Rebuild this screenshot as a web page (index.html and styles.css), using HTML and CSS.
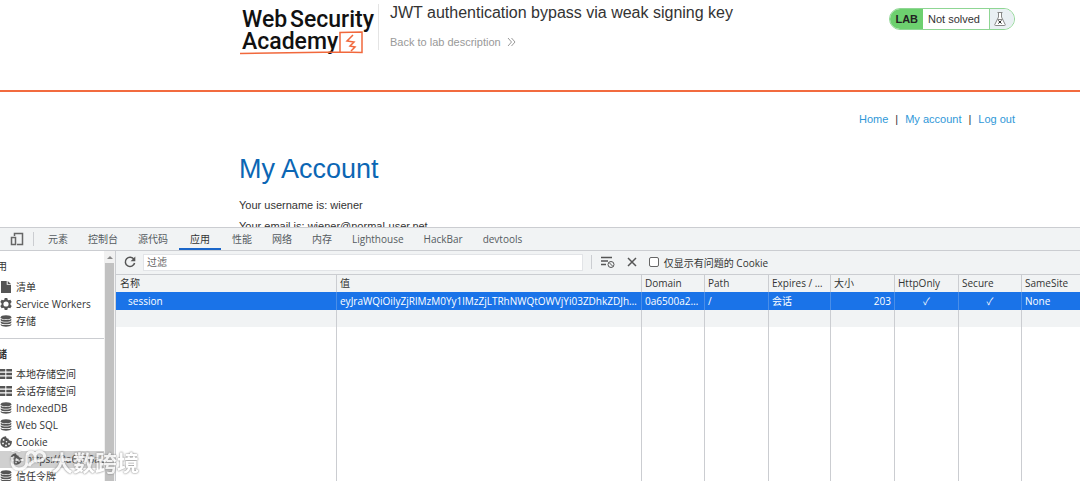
FILE: index.html
```html
<!DOCTYPE html>
<html lang="zh-CN">
<head>
<meta charset="utf-8">
<title>JWT authentication bypass via weak signing key</title>
<link rel="stylesheet" href="styles.css">
</head>
<body>
<svg class="defs" width="0" height="0" aria-hidden="true">
  <symbol id="db" viewBox="0 0 12 12"><ellipse cx="6" cy="2.3" rx="5.3" ry="2"/><path d="M.7 3.7c1 1.6 9.600 1.600 10.600 0v1.500c-1 2-9.600 2-10.600 0zM.7 6.300c1 1.600 9.600 1.600 10.600 0v1.500c-1 2-9.600 2-10.600 0zM.7 8.900c1 1.600 9.600 1.600 10.600 0v1c-1 2.300-9.600 2.300-10.600 0z"/></symbol>
  <symbol id="grid" viewBox="0 0 12 12"><path d="M0 1h5.300v2.600H0zM6.300 1H12v2.600H6.300zM0 4.700h5.300v2.600H0zM6.300 4.700H12v2.600H6.300zM0 8.400h5.300V11H0zM6.300 8.400H12V11H6.300z"/></symbol>
  <symbol id="file" viewBox="0 0 12 12"><path d="M1 0h5.700v3.800H11V12H1zM7.700 0L11 3H7.700z"/></symbol>
  <symbol id="gear" viewBox="0 0 12 12"><path fill-rule="evenodd" d="M4.700 0h2.600l.4 1.700 1 .6 1.700-.5 1.300 2.300L10.500 5.300v1.400l1.200 1.200-1.300 2.300-1.700-.5-1 .6-.4 1.700H4.700l-.4-1.700-1-.6-1.700.5L.3 7.900l1.200-1.200V5.300L.3 4.100l1.300-2.300 1.700.5 1-.6zM6 3.400a2.600 2.600 0 1 0 0 5.200 2.600 2.600 0 0 0 0-5.200z"/></symbol>
  <symbol id="cookie" viewBox="0 0 12 12"><path fill-rule="evenodd" d="M6 .2c.2 1.500.9 2.300 2.300 2.300.2 1.500 1.300 2.300 3.500 2.500A5.800 5.800 0 1 1 6 .2zM3.600 3a.9.900 0 1 0 0 1.800.9.900 0 0 0 0-1.800zM3 6.500A.9.900 0 1 0 3 8.300.9.900 0 0 0 3 6.500zM6.500 5a.8.800 0 1 0 0 1.600.8.800 0 0 0 0-1.600zM6 8.500a.9.900 0 1 0 0 1.800.9.900 0 0 0 0-1.800zM9 7a.9.900 0 1 0 0 1.800A.9.900 0 0 0 9 7z"/></symbol>
</svg>

<main class="site">
  <header class="lab-header">
    <svg class="logo" width="137" height="50" viewBox="0 0 137 50" role="img" aria-label="Web Security Academy">
      <text x="3" y="23">Web</text><text x="51" y="23">Security</text>
      <text x="3" y="45">Academy</text>
      <path class="logo-line" d="M1 49.500L101 48V28.500L123 28V48.500L101 48"/>
      <path class="logo-bolt" d="M114 31l-6 6 7 1-4 4 5 1-4 4"/>
    </svg>
    <div class="lab-title">
      <h2>JWT authentication bypass via weak signing key</h2>
      <a href="#lab">Back to lab description
        <svg width="9" height="8" viewBox="0 0 9 8"><path d="M1 0l3.500 4L1 8M4.500 0L8 4 4.500 8"/></svg>
      </a>
    </div>
    <div class="status">
      <strong>LAB</strong><span class="status-text">Not solved</span>
      <span class="flask"><svg width="12" height="14" viewBox="0 0 12 14"><path d="M3.500.5h5M4.500.500V5L.700 12.800q0 .7.600.7h9.400q.6 0 .6-.7L7.500 5V.5M3.500 7.500h5"/><path class="flask-x" d="M4.300 8.500l3.200 3M7.500 8.500l-3.200 3"/></svg></span>
    </div>
  </header>
  <section class="account">
    <nav class="site-nav"><a href="#home">Home</a><span>|</span><a href="#account">My account</a><span>|</span><a href="#logout">Log out</a></nav>
    <h1>My Account</h1>
    <p>Your username is: wiener</p>
    <p>Your email is: wiener@normal-user.net</p>
  </section>
</main>

<section class="devtools">
  <div class="tabs">
    <button class="device" aria-label="切换设备工具栏"><svg width="14" height="14" viewBox="0 0 14 14"><path d="M4.500 4V1.500h8v11H7M1.500 5.500h4v7h-4z"/></svg></button>
    <button>元素</button><button>控制台</button><button>源代码</button><button class="active">应用</button><button>性能</button><button>网络</button><button>内存</button><button>Lighthouse</button><button>HackBar</button><button>devtools</button>
  </div>
  <div class="workspace">
    <aside class="sidebar">
      <div class="tree">
        <h3>应用</h3>
        <ul>
          <li><svg><use href="#file"/></svg>清单</li>
          <li><svg><use href="#gear"/></svg>Service Workers</li>
          <li><svg><use href="#db"/></svg>存储</li>
        </ul>
        <h3 class="divided">存储</h3>
        <ul>
          <li><svg><use href="#grid"/></svg>本地存储空间</li>
          <li><svg><use href="#grid"/></svg>会话存储空间</li>
          <li><svg><use href="#db"/></svg>IndexedDB</li>
          <li><svg><use href="#db"/></svg>Web SQL</li>
          <li><svg><use href="#cookie"/></svg>Cookie</li>
          <li class="selected"><svg><use href="#cookie"/></svg>https://0a6500a2</li>
          <li><svg><use href="#db"/></svg>信任令牌</li>
        </ul>
      </div>
      <div class="scrollbar"><span class="arrow"></span><span class="thumb"></span></div>
    </aside>
    <div class="panel">
      <div class="toolbar">
        <button class="refresh" aria-label="刷新"><svg width="12" height="12" viewBox="0 0 12 12"><path class="stroke" d="M10 3.300A4.700 4.700 0 1 0 10.600 7"/><path d="M11.300.600v4.700H6.600z"/></svg></button>
        <input class="filter" type="text" placeholder="过滤" aria-label="过滤">
        <span class="separator"></span>
        <button aria-label="清除所有 Cookie"><svg width="14" height="13" viewBox="0 0 14 13"><path class="stroke" d="M0 1.500h11M0 5h7M0 8.500h5"/><circle class="thin" cx="10" cy="8.500" r="3"/><path class="thin" d="M8 6.500l4 4"/></svg></button>
        <button aria-label="删除所选项"><svg width="10" height="10" viewBox="0 0 10 10"><path class="stroke" d="M1 1l8 8M9 1L1 9"/></svg></button>
        <label><input type="checkbox">仅显示有问题的 Cookie</label>
      </div>
      <table>
        <colgroup><col class="c-name"><col><col class="c-narrow"><col class="c-mid"><col class="c-exp"><col class="c-mid"><col class="c-mid"><col class="c-narrow"><col class="c-site"></colgroup>
        <thead><tr><th>名称</th><th>值</th><th>Domain</th><th>Path</th><th>Expires / Max-Age</th><th>大小</th><th>HttpOnly</th><th>Secure</th><th>SameSite</th></tr></thead>
        <tbody>
          <tr class="current"><td class="name">session</td><td>eyJraWQiOiIyZjRlMzM0Yy1lMzZjLTRhNWQtOWVjYi03ZDhkZDJhNTAi</td><td>0a6500a203</td><td>/</td><td>会话</td><td class="num">203</td><td class="tick">✓</td><td class="tick">✓</td><td>None</td></tr>
          <tr class="stripe"><td></td><td></td><td></td><td></td><td></td><td></td><td></td><td></td><td></td></tr>
          <tr class="rest"><td></td><td></td><td></td><td></td><td></td><td></td><td></td><td></td><td></td></tr>
        </tbody>
      </table>
    </div>
  </div>
</section>

<div class="watermark">
  <svg width="38" height="25" viewBox="0 0 38 25"><path d="M3 8v4q0 8 7 8 8 0 8-8V8q0-5 4-5t4 5v3M26 6q2-4 6-3 5 2 3 6-2 3-7 3-6 0-8 5M8 10v2M13 10v2M4 2v1M10 2v1"/></svg>
  <span>大数跨境</span>
</div>
</body>
</html>
```
FILE: styles.css
```css
* { box-sizing: border-box; }
body {
  margin: 0;
  height: 100vh;
  display: flex;
  flex-direction: column;
  overflow: hidden;
  position: relative;
  background: #fff;
  color: #333;
  font-family: "Liberation Sans", Arial, sans-serif;
  font-size: 11px;
}
h1, h2, h3, p, ul { margin: 0; padding: 0; font-weight: normal; }
a { text-decoration: none; }
button { border: 0; padding: 0; background: none; font: inherit; color: inherit; }
svg { flex: none; }
.defs { position: absolute; }

.site { flex: 227 1 0; min-height: 0; overflow: hidden; }
.lab-header {
  display: flex;
  align-items: flex-start;
  height: 92px;
  padding: 4px 65px 0 239px;
  border-bottom: 2px solid #f26b3f;
}
.logo { overflow: visible; }
.logo text { font: 500 23px Roboto, sans-serif; fill: #111; }
.logo-line, .logo-bolt { fill: none; stroke: #f1683c; stroke-width: 1.5; }
.lab-title { flex: 1; margin-left: 2px; padding-left: 11px; border-left: 1px solid #e4e4e4; min-height: 46px; }
.lab-title h2 { font-size: 16px; line-height: 18px; }
.lab-title a { display: flex; align-items: center; gap: 6px; margin-top: 13px; line-height: 14px; color: #999; }
.lab-title a svg { fill: none; stroke: #999; }
.status {
  display: flex;
  height: 22px;
  margin-top: 4px;
  border: 1px solid #8fd694;
  border-radius: 11px;
  overflow: hidden;
  line-height: 20px;
}
.status strong { padding: 0 5px; background: #6dd06f; color: #222; }
.status-text { padding: 0 9px 0 5px; }
.flask { display: flex; align-items: center; justify-content: center; width: 25px; padding-right: 5px; border-left: 1px solid #8fd694; background: #e9eff3; }
.flask svg { fill: #fff; stroke: #888; }
.flask .flask-x { stroke: #222; }

.account { padding: 20px 65px 0 239px; }
.site-nav { display: flex; justify-content: flex-end; gap: 7px; line-height: 14px; }
.site-nav a { color: #2f98d8; }
.account h1 { margin: 25px 0 11px; font-size: 27px; line-height: 36px; color: #0b66b4; }
.account p { margin-bottom: 7px; line-height: 14px; }

.devtools {
  flex: 254 1 0;
  min-height: 0;
  display: flex;
  flex-direction: column;
  border-top: 1px solid #cbcdd1;
  background: #f1f3f4;
  color: #333;
  font-family: "Open Sans", "Noto Sans CJK SC", sans-serif;
  font-size: 10px;
}
.tabs { display: flex; flex: none; height: 23px; border-bottom: 1px solid #cbcdd1; color: #555b61; }
.tabs button { padding: 0 10px; border-bottom: 2px solid transparent; line-height: 22px; white-space: nowrap; }
.tabs .active { margin: 0 1px; border-color: #1b66c9; color: #333; padding: 0 11px; }
.tabs .device { display: flex; align-items: center; margin: 4px 4px 4px 0; padding-right: 9px; border: 0; border-right: 1px solid #cbcdd1; }
.device svg { fill: none; stroke: #666; stroke-width: 1.5; }
.workspace { flex: 1; min-height: 0; display: flex; }
.sidebar { display: flex; width: 116px; flex: none; background: #fff; border-right: 1px solid #cbcdd1; overflow: hidden; }
.tree { flex: 1; min-width: 0; padding-top: 7px; }
.tree h3 { margin-bottom: 4px; text-indent: -13px; font-size: 10px; line-height: 17px; }
.tree .divided { margin-top: 8px; padding-top: 7px; border-top: 1px solid #cbcdd1; margin-bottom: 3px; font-weight: bold; }
.tree ul { list-style: none; }
.tree li { display: flex; align-items: center; gap: 4px; height: 17px; line-height: 17px; white-space: nowrap; overflow: hidden; }
.tree li svg { width: 12px; height: 12px; fill: #555; }
.tree .selected { padding-left: 10px; background: #d0d0d0; }
.scrollbar { display: flex; flex-direction: column; align-items: center; width: 11px; flex: none; padding-top: 5px; background: #f1f1f1; }
.arrow { border: 3px solid transparent; border-top: 0; border-bottom: 3px solid #888; margin-bottom: 4px; }
.thumb { flex: 1; width: 9px; background: #c1c1c1; }

.panel { flex: 1; min-width: 0; display: flex; flex-direction: column; }
.toolbar { display: flex; flex: none; align-items: center; height: 24px; padding-left: 8px; border-bottom: 1px solid #cbcdd1; }
.toolbar svg { display: block; fill: #555; }
.toolbar .stroke { fill: none; stroke: #555; stroke-width: 1.5; }
.toolbar .thin { fill: none; stroke: #555; }
.toolbar button { margin-right: 12px; }
.toolbar .refresh { margin-right: 7px; }
.filter { width: 46%; height: 17px; padding: 0 3px; border: 1px solid #e2e4e7; outline: 0; font: inherit; }
.filter::placeholder { color: #666; }
.separator { width: 1px; height: 14px; margin: 0 9px 0 8px; background: #cbcdd1; }
.toolbar label { display: flex; align-items: center; gap: 5px; }
.toolbar label input { appearance: none; width: 10px; height: 10px; margin: 0; border: 1px solid #666; border-radius: 2px; background: #fff; }

table { flex: 1; width: 100%; height: 100%; table-layout: fixed; border-collapse: separate; border-spacing: 0; }
.c-name { width: 221px; }
.c-mid { width: 64px; }
.c-narrow { width: 63px; }
.c-exp { width: 62px; }
.c-site { width: 58px; }
th, td { height: 17px; padding: 0 3px; border-right: 1px solid #cbcdd1; line-height: 16px; text-align: left; font-weight: normal; white-space: nowrap; overflow: hidden; text-overflow: ellipsis; }
th:last-child, td:last-child { border-right: 0; }
th:first-child { padding-left: 4px; }
.current td { height: 18px; background: #1a73e8; color: #fff; border-right-color: #4a8ee8; }
.current .name { padding-left: 12px; }
.current .num { text-align: right; }
.current .tick { text-align: center; }
.rest td { height: auto; background: #fff; }

.watermark { position: absolute; left: 9px; bottom: 7px; display: flex; align-items: center; gap: 4px; opacity: 0.8; }
.watermark svg { fill: none; stroke: #fff; stroke-width: 3; filter: drop-shadow(0 0 1px #999); }
.watermark span { color: #fff; font: bold 22px/26px "Noto Sans CJK SC", sans-serif; text-shadow: 0 0 2px #777, 0 0 2px #999; }
```
